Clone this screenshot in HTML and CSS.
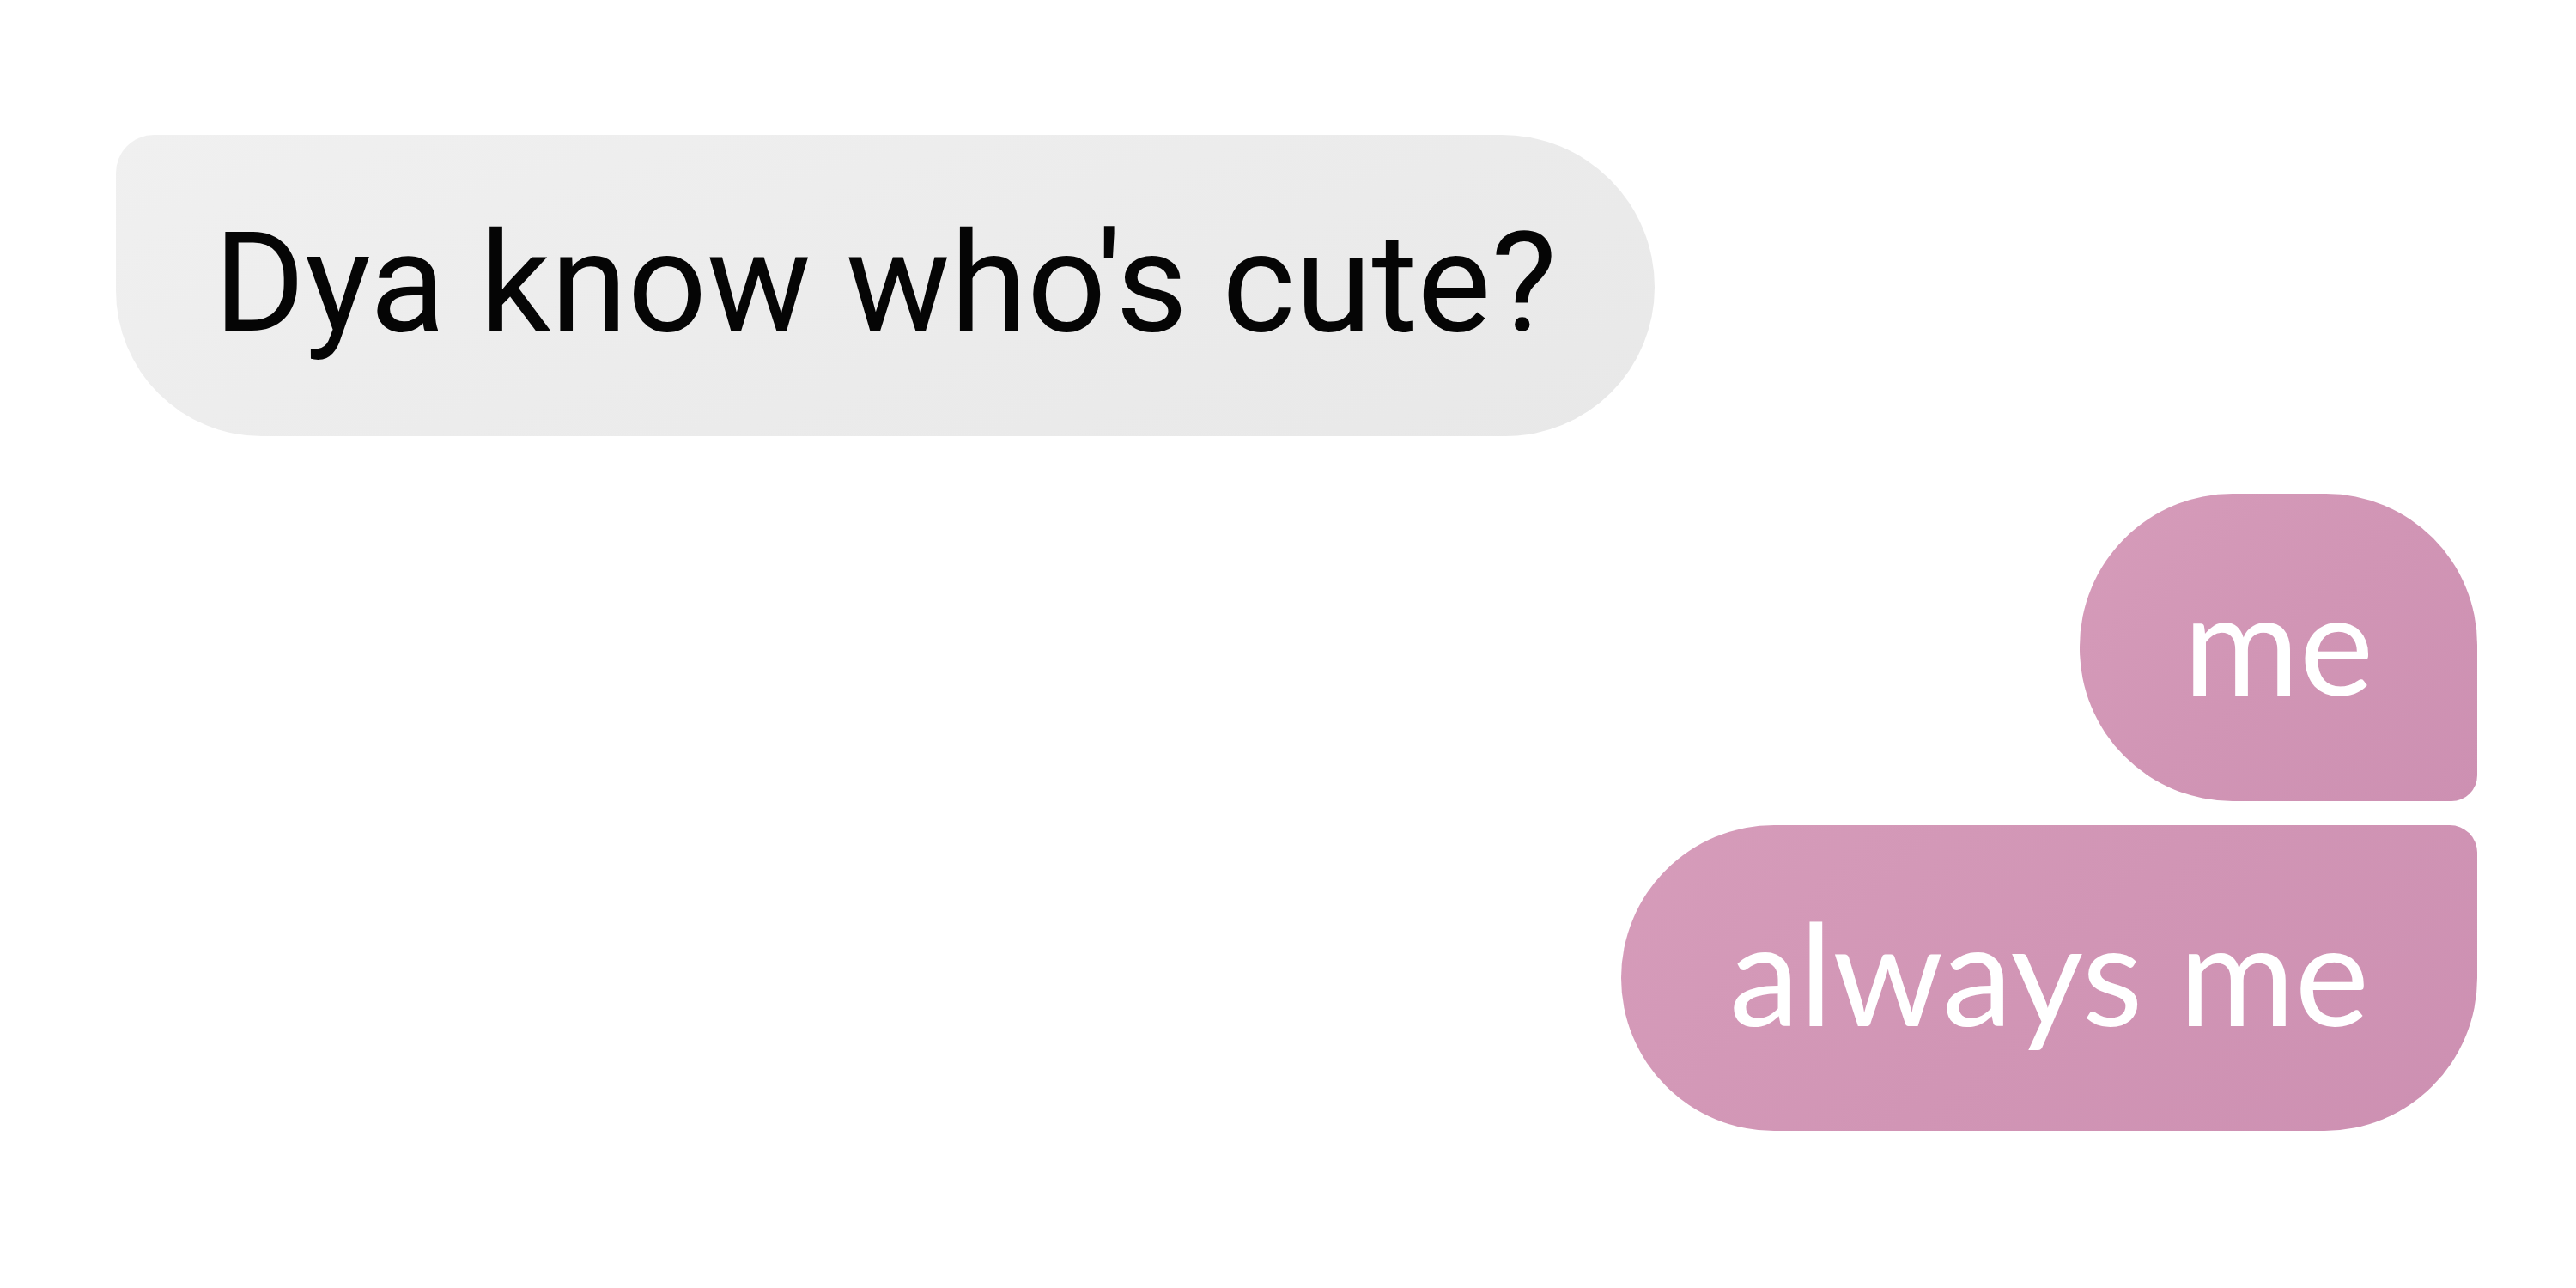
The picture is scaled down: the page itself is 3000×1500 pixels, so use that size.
FILE: index.html
```html
<!DOCTYPE html>
<html lang="en">
<head>
<meta charset="utf-8">
<title>Chat</title>
<link rel="stylesheet" href="styles.css">
</head>
<body>
<main class="chat">
  <div class="bubble bubble-in">Dya know who's cute?</div>
  <div class="bubble bubble-out bubble-out-first">me</div>
  <div class="bubble bubble-out bubble-out-last">always me</div>
</main>
</body>
</html>
```

FILE: styles.css
```css
html, body {
  margin: 0;
  padding: 0;
  background: #ffffff;
}

.chat {
  display: flex;
  flex-direction: column;
  padding: 157px 115px 0 135px;
}

.bubble {
  box-sizing: border-box;
  display: flex;
  align-items: center;
  justify-content: center;
  white-space: nowrap;
}

.bubble-in {
  align-self: flex-start;
  width: 1792px;
  height: 351px;
  padding: 0 0 6px 0;
  background: linear-gradient(160deg, #f0f0f0 0%, #ebebeb 60%, #e8e8e8 100%);
  border-radius: 45px 180px 176px 172px;
  font-family: Roboto, "Liberation Sans", sans-serif;
  font-size: 162px;
  line-height: 1;
  color: #050505;
  letter-spacing: 0;
}

.bubble-out {
  align-self: flex-end;
  height: 358px;
  padding: 0 128px 14px 128px;
  background: linear-gradient(135deg, #d69cba 0%, #d195b5 50%, #cd90b2 100%);
  font-family: Lato, "Open Sans", sans-serif;
  font-size: 164px;
  line-height: 1;
  color: #ffffff;
}

.bubble-out-first {
  margin-top: 67px;
  width: 463px;
  border-radius: 178px 176px 30px 178px;
}

.bubble-out-last {
  margin-top: 28px;
  width: 997px;
  height: 356px;
  border-radius: 178px 32px 178px 178px;
}
```
